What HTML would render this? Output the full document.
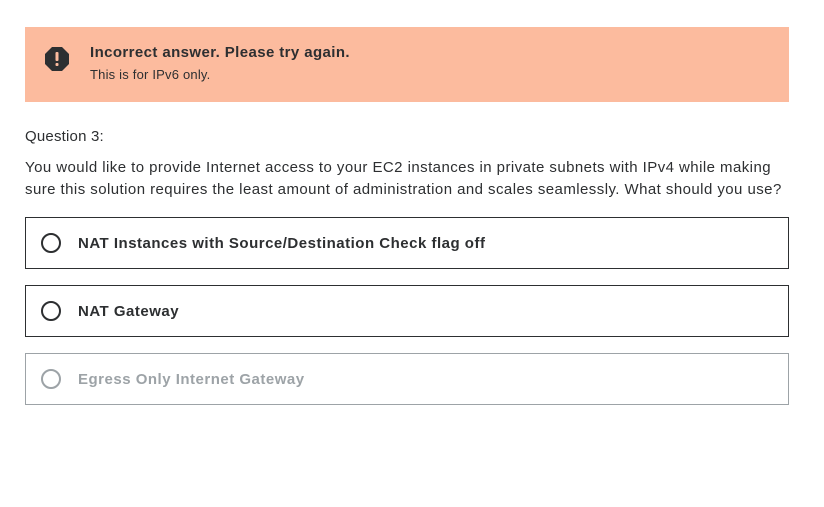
<!DOCTYPE html>
<html><head><style>
body{margin:0;width:824px;height:507px;background:#fff;font-family:"Liberation Sans",sans-serif;color:#2d2f31;position:relative;overflow:hidden}
.ban{position:absolute;left:25px;top:27px;width:764px;height:75px;background:#fcbb9e}
.ban svg{position:absolute;left:20px;top:20px}
.t1{position:absolute;left:65px;top:17px;font-size:15px;font-weight:bold;letter-spacing:0.4px}
.t2{position:absolute;left:65px;top:40px;font-size:13px;letter-spacing:0.2px}
.q{position:absolute;left:25px;top:128px;font-size:15px;letter-spacing:0.2px}
.p{position:absolute;left:25px;top:157px;width:790px;font-size:15px;line-height:22px;letter-spacing:0.44px}
.o{position:absolute;left:25px;width:762px;height:50px;border:1px solid #2d2f31}
.o .r{position:absolute;left:15px;top:15px;width:16px;height:16px;border:2px solid #2d2f31;border-radius:50%}
.o span{position:absolute;left:52px;top:17px;font-size:15px;font-weight:bold;letter-spacing:0.5px}
.d{border-color:#9da3a7;color:#9da3a7}
.d .r{border-color:#9da3a7}
</style></head><body>
<div class="ban">
<svg width="24" height="24" viewBox="0 0 24 24"><polygon points="7,0 17,0 24,7 24,17 17,24 7,24 0,17 0,7" fill="#2d2f31"/><rect x="10.5" y="5" width="3" height="9" rx="1" fill="#fcbb9e"/><rect x="10.5" y="16" width="3" height="3" rx="1" fill="#fcbb9e"/></svg>
<div class="t1">Incorrect answer. Please try again.</div>
<div class="t2">This is for IPv6 only.</div>
</div>
<div class="q">Question 3:</div>
<div class="p">You would like to provide Internet access to your EC2 instances in private subnets with IPv4 while making<br>sure this solution requires the least amount of administration and scales seamlessly. What should you use?</div>
<div class="o" style="top:217px"><div class="r"></div><span>NAT Instances with Source/Destination Check flag off</span></div>
<div class="o" style="top:285px"><div class="r"></div><span>NAT Gateway</span></div>
<div class="o d" style="top:353px"><div class="r"></div><span>Egress Only Internet Gateway</span></div>
</body></html>
